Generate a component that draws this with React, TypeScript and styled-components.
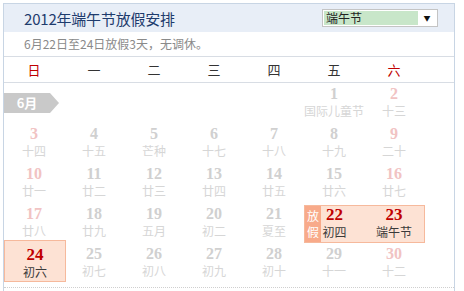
import styled, { createGlobalStyle } from "styled-components";

const GlobalStyle = createGlobalStyle`
  html, body {
    margin: 0;
    padding: 0;
    background: #fff;
    font-family: "Noto Sans CJK SC", "Noto Sans", sans-serif;
  }
`

type Edge = "start" | "end" | "both"

type Day = {
  n?: number
  lunar?: string
  weekend?: boolean
  holiday?: Edge
  off?: boolean
  month?: string
  up?: boolean
}

const weekdays = ["日", "一", "二", "三", "四", "五", "六"]

const rows: Day[][] = [
  [{ month: "6月" }, {}, {}, {}, {}, { n: 1, lunar: "国际儿童节" }, { n: 2, lunar: "十三", weekend: true }],
  [
    { n: 3, lunar: "十四", weekend: true }, { n: 4, lunar: "十五" }, { n: 5, lunar: "芒种" }, { n: 6, lunar: "十七" },
    { n: 7, lunar: "十八" }, { n: 8, lunar: "十九" }, { n: 9, lunar: "二十", weekend: true },
  ],
  [
    { n: 10, lunar: "廿一", weekend: true }, { n: 11, lunar: "廿二" }, { n: 12, lunar: "廿三" }, { n: 13, lunar: "廿四" },
    { n: 14, lunar: "廿五" }, { n: 15, lunar: "廿六" }, { n: 16, lunar: "廿七", weekend: true },
  ],
  [
    { n: 17, lunar: "廿八", weekend: true }, { n: 18, lunar: "廿九" }, { n: 19, lunar: "五月" }, { n: 20, lunar: "初二" },
    { n: 21, lunar: "夏至" }, { n: 22, lunar: "初四", holiday: "start", off: true }, { n: 23, lunar: "端午节", holiday: "end" },
  ],
  [
    { n: 24, lunar: "初六", holiday: "both", up: true }, { n: 25, lunar: "初七" }, { n: 26, lunar: "初八" }, { n: 27, lunar: "初九" },
    { n: 28, lunar: "初十" }, { n: 29, lunar: "十一" }, { n: 30, lunar: "十二", weekend: true },
  ],
]

const App = () => {
  return (
    <>
      <GlobalStyle />
      <Panel>
        <Header>
          <Title>2012年端午节放假安排</Title>
          <Picker>
            <PickerValue>端午节</PickerValue>
            <PickerArrow>▼</PickerArrow>
          </Picker>
        </Header>
        <Notice>6月22日至24日放假3天，无调休。</Notice>
        <WeekRow>
          {weekdays.map((w, i) => (
            <WeekDay key={w} red={i === 0 || i === 6}>{w}</WeekDay>
          ))}
        </WeekRow>
        <Month>
          {rows.flat().map((d, i) => (
            <Cell key={i} edge={d.holiday} up={!!d.up}>
              {d.month && <MonthTag>{d.month}</MonthTag>}
              {d.off && <OffTag>放<br />假</OffTag>}
              {d.n && (
                <>
                  <Num holiday={!!d.holiday} weekend={!!d.weekend}>{d.n}</Num>
                  <Lunar holiday={!!d.holiday}>{d.lunar}</Lunar>
                </>
              )}
            </Cell>
          ))}
        </Month>
      </Panel>
    </>
  )
}

export default App

const Panel = styled.div`
width: 450px;
margin: 3px 0 0 3px;
border: 1px solid #c8d5e4;
border-bottom: none;
height: 300px;
`

const Header = styled.div`
height: 28px;
background-color: #e8eef7;
display: flex;
align-items: center;
justify-content: space-between;
padding: 0 16px 0 20px;
`

const Title = styled.div`
font-size: 15px;
color: #1e3b6d;
letter-spacing: -0.2px;
`

const Picker = styled.div`
width: 112px;
height: 16px;
border: 1px solid #c4c4c4;
background: #fff;
display: flex;
align-items: center;
padding: 0 1px;
`

const PickerValue = styled.div`
flex: 1;
height: 14px;
background-color: #c8e6c9;
font-size: 12px;
line-height: 14px;
color: #222;
padding-left: 2px;
`

const PickerArrow = styled.div`
width: 18px;
text-align: center;
font-size: 7px;
color: #111;
`

const Notice = styled.div`
height: 24px;
line-height: 24px;
padding-left: 20px;
font-size: 12px;
color: #8a8a8a;
border-bottom: 1px solid #d8dde4;
`

const WeekRow = styled.div`
display: grid;
grid-template-columns: repeat(7, 60px);
height: 25px;
border-bottom: 1px solid #d8dde4;
`

const WeekDay = styled.div<{ red: boolean }>`
display: flex;
align-items: center;
justify-content: center;
font-size: 13px;
color: ${({ red }) => (red ? "#c00000" : "#333")};
`

const Month = styled.div`
display: grid;
grid-template-columns: repeat(7, 60px);
grid-auto-rows: 40px;
padding-bottom: 4px;
border-bottom: 1px dotted #cfcfcf;
`

const Cell = styled.div<{ edge?: Edge; up: boolean }>`
position: relative;
display: flex;
flex-direction: column;
align-items: center;
padding-top: 2px;
box-sizing: border-box;
${({ edge }) => edge && `
  background-color: #fde2d4;
  border: 1px solid #f6b99c;
  margin-top: 2px;
  padding-top: 0;
`}
${({ edge }) => edge === "start" && `border-right: none;`}
${({ edge }) => edge === "end" && `border-left: none; margin-right: -1px;`}
${({ up }) => up && `margin-top: -3px; margin-bottom: 1px; padding-top: 5px; margin-right: -2px;`}
`

const Num = styled.div<{ holiday: boolean; weekend: boolean }>`
font-family: "Liberation Serif", serif;
font-weight: bold;
font-size: ${({ holiday }) => (holiday ? "17px" : "16px")};
line-height: 18px;
color: ${({ holiday, weekend }) => (holiday ? "#c00000" : weekend ? "#f1c3c3" : "#d0d0d0")};
`

const Lunar = styled.div<{ holiday: boolean }>`
font-size: 12px;
line-height: 16px;
color: ${({ holiday }) => (holiday ? "#3a3a3a" : "#d6d6d6")};
white-space: nowrap;
`

const MonthTag = styled.div`
position: absolute;
left: 0;
top: 10px;
width: 46px;
height: 20px;
background-color: #c9c9c9;
color: #fff;
font-size: 13px;
font-weight: bold;
line-height: 20px;
text-align: center;

&::after {
  content: "";
  position: absolute;
  right: -9px;
  top: 0;
  border-left: 9px solid #c9c9c9;
  border-top: 10px solid transparent;
  border-bottom: 10px solid transparent;
}
`

const OffTag = styled.div`
position: absolute;
left: 0;
top: 0;
bottom: 0;
width: 16px;
background-color: #f8aa8a;
color: #fff;
font-size: 12px;
line-height: 16px;
display: flex;
align-items: center;
justify-content: center;
text-align: center;
`
